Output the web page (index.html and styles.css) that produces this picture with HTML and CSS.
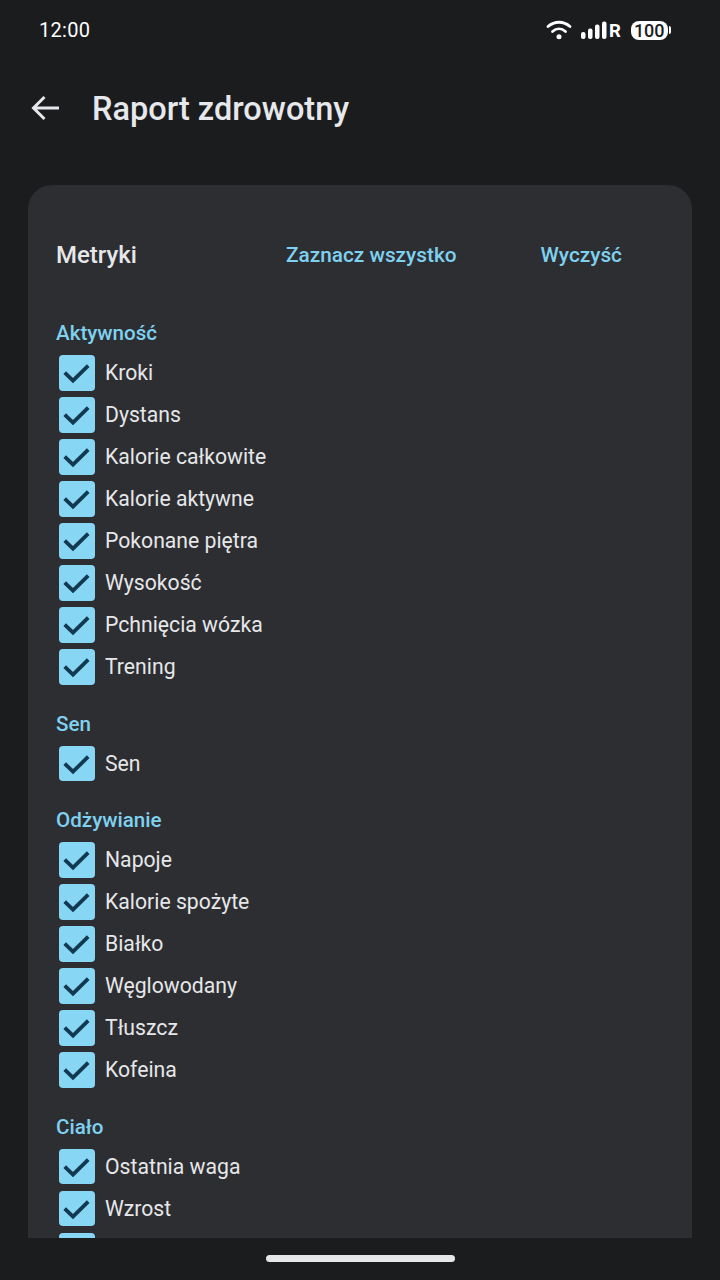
FILE: index.html
```html
<!DOCTYPE html>
<html lang="pl">
<head>
<meta charset="utf-8">
<title>Raport zdrowotny</title>
<link rel="stylesheet" href="styles.css">
</head>
<body>
<div class="screen">
  <div class="status">
    <span class="time">12:00</span>
    <div class="status-icons">
      <svg class="wifi" width="26" height="20" viewBox="0 0 26 20"><g fill="none" stroke="#fff" stroke-width="2.8" stroke-linecap="round"><path d="M2 6.500C8.500 .8 17.500 .8 24 6.500"/><path d="M6.500 11.500C10.500 8 15.500 8 19.500 11.500"/></g><circle cx="13" cy="16.800" r="2.500" fill="#fff"/></svg>
      <svg class="signal" width="27" height="20" viewBox="0 0 27 20"><g fill="#fff"><rect x="0" y="12" width="4.500" height="7" rx="2"/><rect x="7" y="8.500" width="4.500" height="10.500" rx="2"/><rect x="14" y="4.500" width="4.500" height="14.500" rx="2"/><rect x="21" y="1.500" width="4.500" height="17.500" rx="2"/></g></svg>
      <span class="net">R</span>
      <span class="battery"><span class="battery-level">100</span><span class="battery-tip"></span></span>
    </div>
  </div>
  <header class="appbar">
    <svg class="back" width="32" height="32" viewBox="0 0 32 32"><path d="M29 16H4M14.500 5 3.500 16l11 11" fill="none" stroke="#e6e8eb" stroke-width="3"/></svg>
    <h1 class="title">Raport zdrowotny</h1>
  </header>
  <main class="card">
    <div class="card-head">
      <h2 class="card-title">Metryki</h2>
      <span class="action action-all">Zaznacz wszystko</span>
      <span class="action action-clear">Wyczyść</span>
    </div>
    <section class="group">
      <h3 class="group-label">Aktywność</h3>
      <div class="row"><span class="box"><svg viewBox="0 0 36 36"><path d="M5.700 17.700 14 25.700 29.200 10.700"/></svg></span><span class="label">Kroki</span></div>
      <div class="row"><span class="box"><svg viewBox="0 0 36 36"><path d="M5.700 17.700 14 25.700 29.200 10.700"/></svg></span><span class="label">Dystans</span></div>
      <div class="row"><span class="box"><svg viewBox="0 0 36 36"><path d="M5.700 17.700 14 25.700 29.200 10.700"/></svg></span><span class="label">Kalorie całkowite</span></div>
      <div class="row"><span class="box"><svg viewBox="0 0 36 36"><path d="M5.700 17.700 14 25.700 29.200 10.700"/></svg></span><span class="label">Kalorie aktywne</span></div>
      <div class="row"><span class="box"><svg viewBox="0 0 36 36"><path d="M5.700 17.700 14 25.700 29.200 10.700"/></svg></span><span class="label">Pokonane piętra</span></div>
      <div class="row"><span class="box"><svg viewBox="0 0 36 36"><path d="M5.700 17.700 14 25.700 29.200 10.700"/></svg></span><span class="label">Wysokość</span></div>
      <div class="row"><span class="box"><svg viewBox="0 0 36 36"><path d="M5.700 17.700 14 25.700 29.200 10.700"/></svg></span><span class="label">Pchnięcia wózka</span></div>
      <div class="row"><span class="box"><svg viewBox="0 0 36 36"><path d="M5.700 17.700 14 25.700 29.200 10.700"/></svg></span><span class="label">Trening</span></div>
    </section>
    <section class="group">
      <h3 class="group-label">Sen</h3>
      <div class="row"><span class="box"><svg viewBox="0 0 36 36"><path d="M5.700 17.700 14 25.700 29.200 10.700"/></svg></span><span class="label">Sen</span></div>
    </section>
    <section class="group">
      <h3 class="group-label">Odżywianie</h3>
      <div class="row"><span class="box"><svg viewBox="0 0 36 36"><path d="M5.700 17.700 14 25.700 29.200 10.700"/></svg></span><span class="label">Napoje</span></div>
      <div class="row"><span class="box"><svg viewBox="0 0 36 36"><path d="M5.700 17.700 14 25.700 29.200 10.700"/></svg></span><span class="label">Kalorie spożyte</span></div>
      <div class="row"><span class="box"><svg viewBox="0 0 36 36"><path d="M5.700 17.700 14 25.700 29.200 10.700"/></svg></span><span class="label">Białko</span></div>
      <div class="row"><span class="box"><svg viewBox="0 0 36 36"><path d="M5.700 17.700 14 25.700 29.200 10.700"/></svg></span><span class="label">Węglowodany</span></div>
      <div class="row"><span class="box"><svg viewBox="0 0 36 36"><path d="M5.700 17.700 14 25.700 29.200 10.700"/></svg></span><span class="label">Tłuszcz</span></div>
      <div class="row"><span class="box"><svg viewBox="0 0 36 36"><path d="M5.700 17.700 14 25.700 29.200 10.700"/></svg></span><span class="label">Kofeina</span></div>
    </section>
    <section class="group">
      <h3 class="group-label">Ciało</h3>
      <div class="row"><span class="box"><svg viewBox="0 0 36 36"><path d="M5.700 17.700 14 25.700 29.200 10.700"/></svg></span><span class="label">Ostatnia waga</span></div>
      <div class="row"><span class="box"><svg viewBox="0 0 36 36"><path d="M5.700 17.700 14 25.700 29.200 10.700"/></svg></span><span class="label">Wzrost</span></div>
      <div class="row"><span class="box"><svg viewBox="0 0 36 36"><path d="M5.700 17.700 14 25.700 29.200 10.700"/></svg></span></div>
    </section>
  </main>
  <div class="navbar"><span class="handle"></span></div>
</div>
</body>
</html>
```
FILE: styles.css
```css
* { box-sizing: border-box; margin: 0; padding: 0; }
html, body { width: 720px; height: 1280px; overflow: hidden; background: #1b1c1e; }
body { font-family: Roboto, sans-serif; color: #e6e7e9; }
.screen { width: 720px; height: 1280px; display: flex; flex-direction: column; }
.status { height: 60px; flex: none; display: flex; align-items: center; justify-content: space-between; padding: 0 49px 0 39px; }
.time { font-size: 20px; color: #fff; letter-spacing: 0.3px; }
.status-icons { display: flex; align-items: center; }
.wifi { margin-right: 9px; }
.net { font-size: 18.500px; font-weight: 700; color: #fff; line-height: 20px; width: 13px; margin-left: 1px; margin-right: 9px; padding-top: 1px; }
.battery { display: flex; align-items: center; }
.battery-level { background: #fff; color: #1b1c1e; border-radius: 8px; width: 36.500px; height: 19px; font-size: 18px; font-weight: 500; line-height: 19px; text-align: center; }
.battery-tip { width: 2.500px; height: 8px; background: #fff; border-radius: 0 2px 2px 0; margin-left: 1px; }
.appbar { height: 96px; flex: none; display: flex; align-items: center; padding-left: 30px; }
.back { flex: none; margin-right: 30px; }
.title { font-size: 32.500px; font-weight: 500; color: #e6e8eb; margin-top: 2px; }
.card { margin: 29px 28px 0; height: 1053px; flex: none; background: #2d2e32; border-radius: 24px 24px 0 0; overflow: hidden; padding: 0 28px; }
.card-head { height: 140px; flex: none; display: flex; align-items: center; margin-bottom: -4px; }
.card-title { font-size: 24px; font-weight: 500; color: #e6e7e9; width: 230px; }
.action { font-size: 20.800px; font-weight: 500; color: #7fd1f0; }
.action-clear { margin-left: 84px; }
.group { margin-bottom: 23.500px; }
.group-label { font-size: 20.600px; font-weight: 500; color: #7fd1f0; height: 24px; line-height: 24px; margin-bottom: 7px; }
.row { height: 42px; display: flex; align-items: center; padding-left: 3px; }
.box { width: 35.500px; height: 35.500px; background: #86d6f4; border-radius: 4px; flex: none; display: block; }
.box svg { display: block; width: 36px; height: 36px; fill: none; stroke: #12394f; stroke-width: 3.800; }
.label { font-size: 21.200px; margin-left: 10.500px; margin-top: -1px; color: #e6e7e9; }
.navbar { flex: 1; display: flex; justify-content: center; padding-top: 17px; }
.handle { width: 189px; height: 7px; border-radius: 4px; background: #e6e7e9; }
```
